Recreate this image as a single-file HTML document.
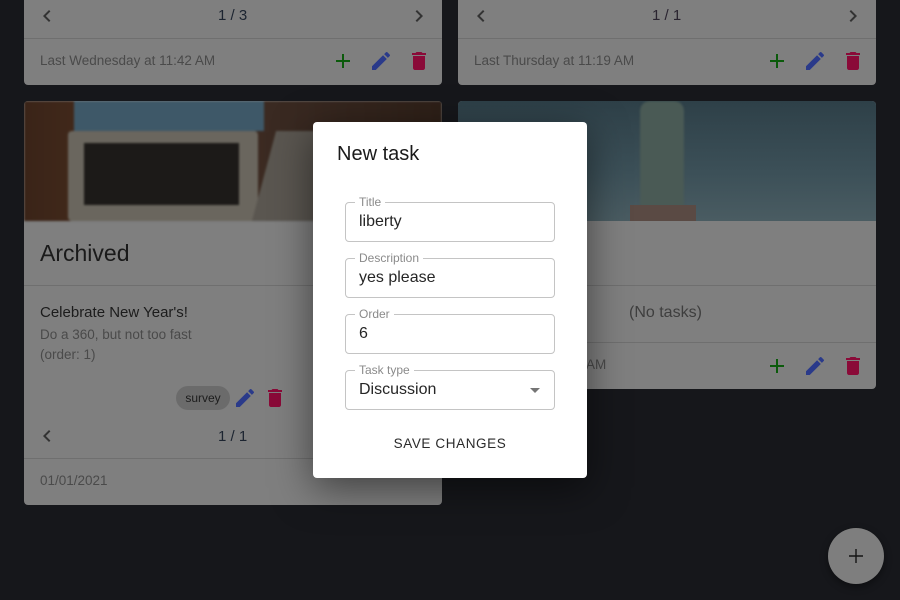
<!DOCTYPE html>
<html><head><meta charset="utf-8"><style>
*{box-sizing:border-box;margin:0;padding:0}
body{width:900px;height:600px;overflow:hidden;background:#16171b;font-family:"Liberation Sans",Arial,sans-serif;position:relative}
.card{position:absolute;background:#7f7f7f;border-radius:4px;overflow:hidden}
.t{position:absolute;white-space:nowrap}
.hr{position:absolute;left:0;right:0;height:1px;background:#6f6f6f}
svg{position:absolute}
.dlg{position:absolute;left:313px;top:122px;width:274px;height:356px;background:#fff;border-radius:4px;box-shadow:0 10px 40px rgba(0,0,0,.5)}
.f{position:absolute;left:32px;width:210px;height:40px;border:1px solid #c4c4c4;border-radius:4px}
.f .lb{position:absolute;left:9px;top:-8px;background:#fff;padding:0 4px;font-size:12px;color:#8a8a8a}
.f .v{position:absolute;left:13px;top:10px;font-size:16px;color:#262626}
</style></head><body>
<svg width="0" height="0" style="position:absolute"><defs>
<path id="pl" d="M19 13h-6v6h-2v-6H5v-2h6V5h2v6h6v2z"/>
<path id="ed" d="M3 17.25V21h3.75L17.81 9.94l-3.75-3.75L3 17.25zM20.71 7.04c.39-.39.39-1.02 0-1.41l-2.34-2.34a1 1 0 0 0-1.41 0l-1.83 1.83 3.75 3.75 1.83-1.83z"/>
<path id="dl" d="M6 19c0 1.1.9 2 2 2h8c1.1 0 2-.9 2-2V7H6v12zM19 4h-3.5l-1-1h-5l-1 1H5v2h14V4z"/>
<path id="lf" d="M15.41 7.41 14 6l-6 6 6 6 1.41-1.41L10.83 12z"/>
<path id="rt" d="M10 6 8.59 7.41 13.17 12l-4.58 4.59L10 18l6-6z"/>
</defs></svg>

<!-- top left card -->
<div class="card" style="left:24px;top:-10px;width:418px;height:95px">
 <svg style="left:11px;top:14px" width="24" height="24" viewBox="0 0 24 24" fill="#333"><use href="#lf"/></svg>
 <div class="t" style="left:194px;top:17px;font-size:15px;color:#1c2430">1 / 3</div>
 <svg style="left:383px;top:14px" width="24" height="24" viewBox="0 0 24 24" fill="#333"><use href="#rt"/></svg>
 <div class="hr" style="top:48px"></div>
 <div class="t" style="left:16px;top:63px;font-size:13.5px;color:#4a4a4a">Last Wednesday at 11:42 AM</div>
 <svg style="left:307px;top:59px" width="24" height="24" viewBox="0 0 24 24" fill="#0b5a0b"><use href="#pl"/></svg>
 <svg style="left:345px;top:59px" width="24" height="24" viewBox="0 0 24 24" fill="#2a3a8a"><use href="#ed"/></svg>
 <svg style="left:383px;top:59px" width="24" height="24" viewBox="0 0 24 24" fill="#8a0a38"><use href="#dl"/></svg>
</div>
<!-- top right card -->
<div class="card" style="left:458px;top:-10px;width:418px;height:95px">
 <svg style="left:11px;top:14px" width="24" height="24" viewBox="0 0 24 24" fill="#333"><use href="#lf"/></svg>
 <div class="t" style="left:194px;top:17px;font-size:15px;color:#2a2430">1 / 1</div>
 <svg style="left:383px;top:14px" width="24" height="24" viewBox="0 0 24 24" fill="#333"><use href="#rt"/></svg>
 <div class="hr" style="top:48px"></div>
 <div class="t" style="left:16px;top:63px;font-size:13.5px;color:#4a4a4a">Last Thursday at 11:19 AM</div>
 <svg style="left:307px;top:59px" width="24" height="24" viewBox="0 0 24 24" fill="#0b5a0b"><use href="#pl"/></svg>
 <svg style="left:345px;top:59px" width="24" height="24" viewBox="0 0 24 24" fill="#2a3a8a"><use href="#ed"/></svg>
 <svg style="left:383px;top:59px" width="24" height="24" viewBox="0 0 24 24" fill="#8a0a38"><use href="#dl"/></svg>
</div>

<!-- left archived card -->
<div class="card" style="left:24px;top:101px;width:418px;height:404px">
 <div style="position:absolute;left:0;top:0;width:418px;height:120px;background:linear-gradient(90deg,#3a2418 0%,#4a2e1e 30%,#3a2a22 60%,#2e2018 100%);filter:blur(1px)">
  <div style="position:absolute;left:50px;top:0;width:190px;height:30px;background:#3e5868"></div>
  <div style="position:absolute;left:44px;top:30px;width:190px;height:90px;background:#6a665e;border-radius:4px"></div>
  <div style="position:absolute;left:60px;top:42px;width:155px;height:62px;background:#1c1a18"></div>
  <div style="position:absolute;left:240px;top:30px;width:70px;height:90px;background:#5a5650;transform:skewX(-15deg)"></div>
 </div>
 <div class="t" style="left:16px;top:139px;font-size:23px;color:#1a1a1a">Archived</div>
 <div class="hr" style="top:184px"></div>
 <div class="t" style="left:16px;top:203px;font-size:15px;color:#1c1c1c">Celebrate New Year's!</div>
 <div class="t" style="left:16px;top:226px;font-size:13.5px;color:#4a4a4a">Do a 360, but not too fast</div>
 <div class="t" style="left:16px;top:246px;font-size:13.5px;color:#4a4a4a">(order: 1)</div>
 <div style="position:absolute;left:152px;top:285px;width:54px;height:24px;border-radius:12px;background:#6b6b6b;font-size:12px;color:#1c1c1c;text-align:center;line-height:24px">survey</div>
 <svg style="left:209px;top:285px" width="24" height="24" viewBox="0 0 24 24" fill="#2a3a8a"><use href="#ed"/></svg>
 <svg style="left:239px;top:285px" width="24" height="24" viewBox="0 0 24 24" fill="#8a0a38"><use href="#dl"/></svg>
 <svg style="left:11px;top:323px" width="24" height="24" viewBox="0 0 24 24" fill="#333"><use href="#lf"/></svg>
 <div class="t" style="left:194px;top:327px;font-size:15px;color:#1c2430">1 / 1</div>
 <div class="hr" style="top:357px"></div>
 <div class="t" style="left:16px;top:372px;font-size:13.5px;color:#4a4a4a">01/01/2021</div>
</div>

<!-- right card -->
<div class="card" style="left:458px;top:101px;width:418px;height:288px">
 <div style="position:absolute;left:0;top:0;width:418px;height:120px;background:linear-gradient(180deg,#2e4048 0%,#3c5058 60%,#4a5c62 100%)">
  <div style="position:absolute;left:182px;top:0;width:44px;height:105px;background:#4a5a55;border-radius:10px 10px 0 0;filter:blur(1px)"></div>
  <div style="position:absolute;left:172px;top:104px;width:66px;height:16px;background:#5a4a44"></div>
 </div>
 <div class="hr" style="top:184px"></div>
 <div class="t" style="left:171px;top:203px;font-size:16px;color:#3e3e3e">(No tasks)</div>
 <div class="hr" style="top:241px"></div>
 <div class="t" style="left:128px;top:256px;font-size:13.5px;color:#4a4a4a">AM</div>
 <svg style="left:307px;top:253px" width="24" height="24" viewBox="0 0 24 24" fill="#0b5a0b"><use href="#pl"/></svg>
 <svg style="left:345px;top:253px" width="24" height="24" viewBox="0 0 24 24" fill="#2a3a8a"><use href="#ed"/></svg>
 <svg style="left:383px;top:253px" width="24" height="24" viewBox="0 0 24 24" fill="#8a0a38"><use href="#dl"/></svg>
</div>

<!-- FAB -->
<div style="position:absolute;left:828px;top:528px;width:56px;height:56px;border-radius:50%;background:#7e7e7e;box-shadow:0 3px 8px rgba(0,0,0,.4)"></div>
<svg style="left:844px;top:544px" width="24" height="24" viewBox="0 0 24 24" fill="#141414"><path d="M19 12.7h-6.3V19h-1.4v-6.3H5v-1.4h6.3V5h1.4v6.3H19z"/></svg>

<!-- dialog -->
<div class="dlg">
 <div class="t" style="left:24px;top:21px;font-size:20px;color:#1a1a1a">New task</div>
 <div class="f" style="top:80px"><span class="lb">Title</span><span class="v">liberty</span></div>
 <div class="f" style="top:136px"><span class="lb">Description</span><span class="v">yes please</span></div>
 <div class="f" style="top:192px"><span class="lb">Order</span><span class="v">6</span></div>
 <div class="f" style="top:248px"><span class="lb">Task type</span><span class="v">Discussion</span>
  <div style="position:absolute;left:184px;top:17px;width:0;height:0;border-left:5px solid transparent;border-right:5px solid transparent;border-top:5px solid #757575"></div></div>
 <div class="t" style="left:0;width:274px;text-align:center;top:314px;font-size:13.5px;color:#2a2a2a;letter-spacing:.6px;font-weight:500">SAVE CHANGES</div>
</div>
</body></html>
